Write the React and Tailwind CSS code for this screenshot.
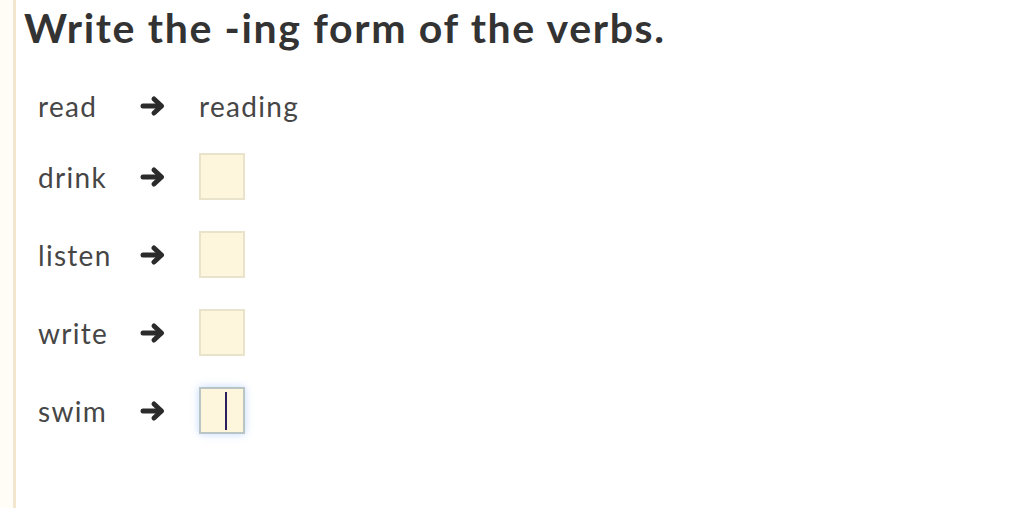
import React from 'react';

const rows = [
  { word: 'read', answer: 'reading' },
  { word: 'drink' },
  { word: 'listen' },
  { word: 'write' },
  { word: 'swim', focused: true },
];

const Arrow = () => (
  <svg width="26" height="22" viewBox="0 0 26 22" className="shrink-0">
    <g fill="none" stroke="#2b2b2b" strokeWidth="5" strokeLinecap="round" strokeLinejoin="round">
      <line x1="3" y1="11" x2="21" y2="11" />
      <polyline points="14,4 21.5,11 14,18" />
    </g>
  </svg>
);

const App = () => {
  return (
    <div className="w-[1024px] h-[508px] bg-white overflow-hidden flex" style={{ fontFamily: 'Lato, "Noto Sans", sans-serif' }}>
      <div className="w-[13px] bg-[#fffdf6]" />
      <div className="w-[3px] bg-[#f2e6cf]" />
      <div className="flex-1 pl-[8px] pt-[2px]">
        <h1 className="text-[41px] leading-[52px] font-bold text-[#333333] tracking-[1.65px]">
          Write the -ing form of the verbs.
        </h1>

        <div className="flex flex-col pl-[14px] mt-[28px]">
          {rows.map((row) => (
            <div key={row.word} className="flex items-center h-[47px] mb-[31px] first:mb-[24px] text-[28px] text-[#464646] tracking-[1.3px]">
              <span className="w-[102px]">{row.word}</span>
              <Arrow />
              <div className="ml-[33px]">
                {row.answer ? (
                  <span>{row.answer}</span>
                ) : (
                  <div
                    className={`w-[46px] h-[47px] bg-[#fdf6dc] border-2 flex items-center justify-center ${
                      row.focused ? 'border-[#b9c4c4] shadow-[0_0_8px_rgba(120,170,255,0.45)]' : 'border-[#e9e3cb]'
                    }`}
                  >
                    {row.focused && <div className="w-[2px] h-[38px] bg-[#2a1f5c] ml-[8px]" />}
                  </div>
                )}
              </div>
            </div>
          ))}
        </div>
      </div>
    </div>
  );
};

export default App;
